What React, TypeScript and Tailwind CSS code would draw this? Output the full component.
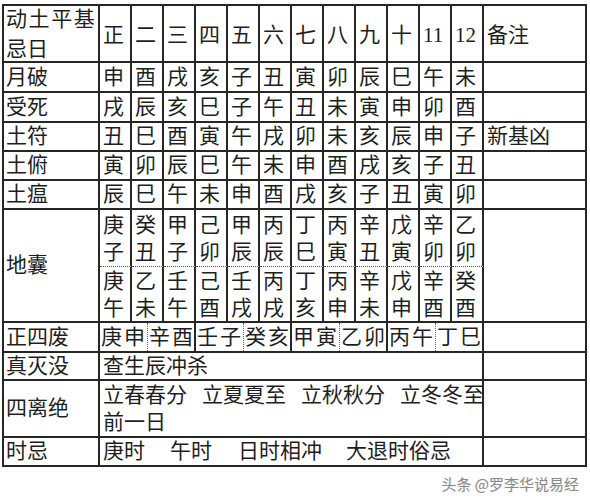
import React from 'react';

const months = ['正', '二', '三', '四', '五', '六', '七', '八', '九', '十', '11', '12'];

const simpleRows: { label: string; cells: string[]; note?: string }[] = [
  { label: '月破', cells: '申酉戌亥子丑寅卯辰巳午未'.split('') },
  { label: '受死', cells: '戌辰亥巳子午丑未寅申卯酉'.split('') },
  { label: '土符', cells: '丑巳酉寅午戌卯未亥辰申子'.split(''), note: '新基凶' },
  { label: '土俯', cells: '寅卯辰巳午未申酉戌亥子丑'.split('') },
  { label: '土瘟', cells: '辰巳午未申酉戌亥子丑寅卯'.split('') },
];

const dinangTop = ['庚子', '癸丑', '甲子', '己卯', '甲辰', '丙辰', '丁巳', '丙寅', '辛丑', '戊寅', '辛卯', '乙卯'];
const dinangBottom = ['庚午', '乙未', '壬午', '己酉', '壬戌', '丙戌', '丁亥', '丙申', '辛未', '戊申', '辛酉', '癸酉'];
const sifei = ['庚申', '辛酉', '壬子', '癸亥', '甲寅', '乙卯', '丙午', '丁巳'];

const cell = 'border-r-2 border-b-2 border-[#262626] flex items-center pl-[3px] overflow-hidden whitespace-nowrap';
const label = 'border-r-2 border-b-2 border-[#262626] flex items-center pl-[2px] overflow-hidden whitespace-nowrap';

const Stack = ({ pair }: { pair: string }) => (
  <div className="flex flex-col leading-[27px] pt-[1px]">
    <span>{pair[0]}</span>
    <span>{pair[1]}</span>
  </div>
);

export default function App() {
  return (
    <div
      className="bg-white w-[590px] h-[500px] text-[#1e1e1e] text-[21px] leading-none"
      style={{ fontFamily: '"Liberation Serif", "Noto Sans CJK SC", serif' }}
    >
      <div className="pt-[4px] pl-[2px]">
        <div className="grid grid-cols-[96px_repeat(12,32px)_103px] grid-rows-[57px_30px_30px_29px_29px_29px_57px_56px_30px_28px_57px_29px] border-l-2 border-t-2 border-[#262626] w-max">
          {/* header */}
          <div className={`${label} flex-col items-start justify-center leading-[30px] pl-[1px]`}>
            <span className="tracking-[1.6px]">动土平基</span>
            <span>忌日</span>
          </div>
          {months.map((m) => (
            <div key={m} className={`${cell} pt-[4px]`}>
              {m}
            </div>
          ))}
          <div className={`${cell} pt-[4px]`}>备注</div>

          {simpleRows.map((r) => (
            <React.Fragment key={r.label}>
              <div className={label}>{r.label}</div>
              {r.cells.map((c, i) => (
                <div key={i} className={cell}>
                  {c}
                </div>
              ))}
              <div className={cell}>{r.note ?? ''}</div>
            </React.Fragment>
          ))}

          {/* 地囊 */}
          <div className={`${label} row-span-2`}>地囊</div>
          {dinangTop.map((p, i) => (
            <div
              key={'t' + i}
              className="border-r-2 border-[#262626] border-b [border-bottom-style:dotted] border-b-[#555] pl-[3px] flex items-center"
              style={{ gridColumnStart: i + 2, gridRowStart: 7 }}
            >
              <Stack pair={p} />
            </div>
          ))}
          <div className={`${cell} row-span-2`} style={{ gridColumnStart: 14, gridRowStart: 7 }} />
          {dinangBottom.map((p, i) => (
            <div
              key={'b' + i}
              className="border-r-2 border-b-2 border-[#262626] pl-[3px] flex items-center"
              style={{ gridColumnStart: i + 2, gridRowStart: 8 }}
            >
              <Stack pair={p} />
            </div>
          ))}

          {/* 正四废 */}
          <div className={label}>正四废</div>
          <div className="col-span-12 border-r-2 border-b-2 border-[#262626] flex">
            {sifei.map((p, i) => (
              <div
                key={p}
                className={
                  i === 7
                    ? 'flex-1 flex items-center pl-[1px] tracking-[2px] whitespace-nowrap'
                    : i % 2 === 0
                      ? 'w-[48px] flex items-center pl-[1px] tracking-[2px] whitespace-nowrap border-r border-[#666] border-dotted'
                      : 'w-[48px] flex items-center pl-[1px] tracking-[2px] whitespace-nowrap border-r-2 border-[#262626]'
                }
              >
                {p}
              </div>
            ))}
          </div>
          <div className={cell} />

          {/* 真灭没 */}
          <div className={label}>真灭没</div>
          <div className={`${cell} col-span-12`}>查生辰冲杀</div>
          <div className={cell} />

          {/* 四离绝 */}
          <div className={label}>四离绝</div>
          <div className={`${cell} col-span-12 flex-col items-start justify-center leading-[27px]`}>
            <div className="flex">
              <span className="mr-[15px]">立春春分</span>
              <span className="mr-[15px]">立夏夏至</span>
              <span className="mr-[15px]">立秋秋分</span>
              <span>立冬冬至</span>
            </div>
            <span>前一日</span>
          </div>
          <div className={cell} />

          {/* 时忌 */}
          <div className={label}>时忌</div>
          <div className={`${cell} col-span-12`}>
            <span className="mr-[25px]">庚时</span>
            <span className="mr-[26px]">午时</span>
            <span className="mr-[24px]">日时相冲</span>
            <span>大退时俗忌</span>
          </div>
          <div className={cell} />
        </div>

        <div className="flex justify-end pr-[11px] mt-[7px]">
          <span
            className="text-[15px] leading-[20px] text-[#8a8a8a]"
            style={{
              fontFamily: '"Noto Sans CJK SC", sans-serif',
              textShadow: '0 0 2px #fff, 0 0 1px #ccc',
            }}
          >
            头条 @罗李华说易经
          </span>
        </div>
      </div>
    </div>
  );
}
